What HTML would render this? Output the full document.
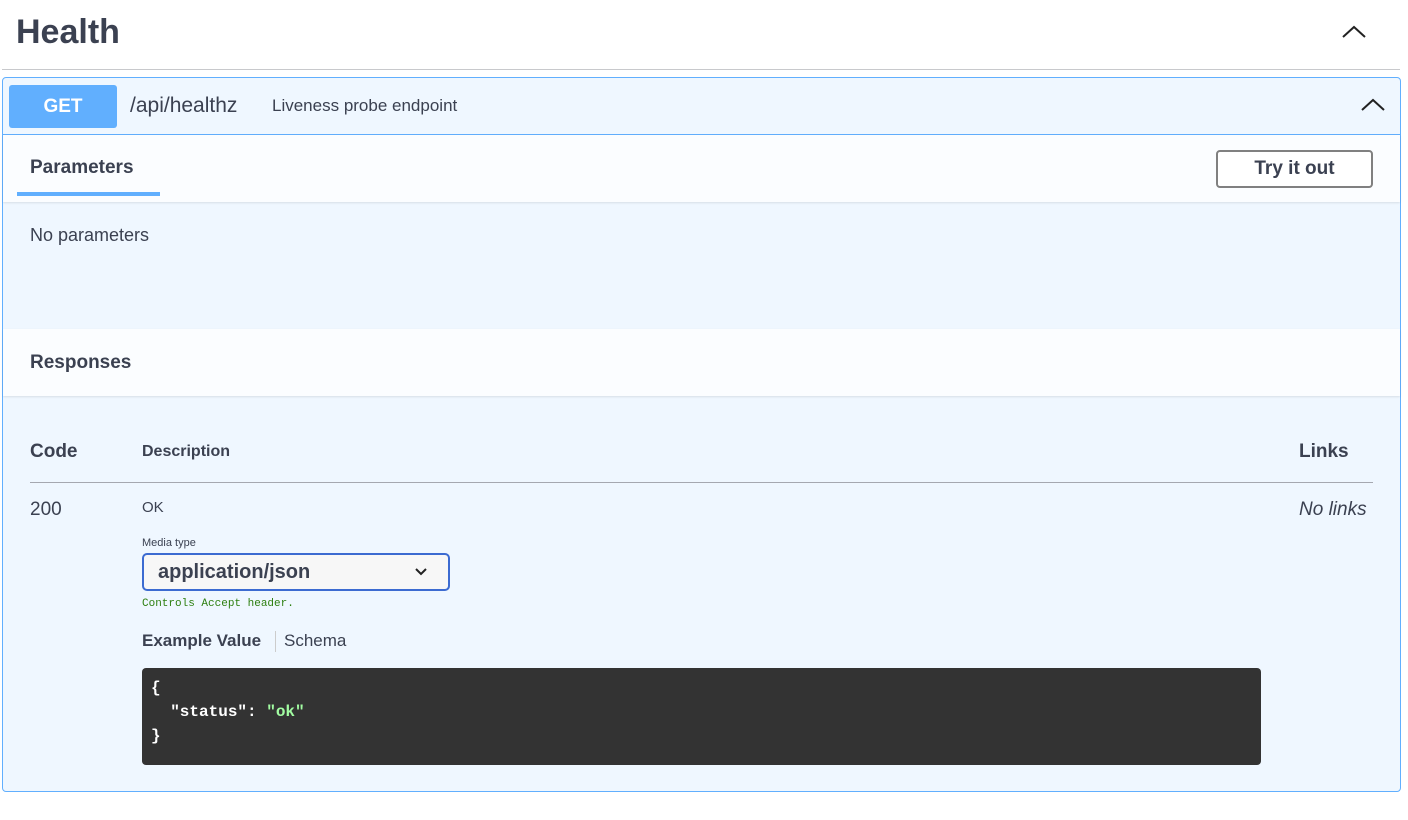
<!DOCTYPE html>
<html><head><meta charset="utf-8"><style>
*{box-sizing:border-box;margin:0;padding:0}
body{width:1408px;height:820px;background:#fff;font-family:"Liberation Sans",sans-serif;color:#3b4151;position:relative;overflow:hidden}
.abs{position:absolute}
</style></head><body>
<div class="abs" style="left:16px;top:12px;font-size:34px;font-weight:bold;line-height:40px">Health</div>
<svg class="abs" style="left:1341px;top:24px" width="26" height="16" viewBox="0 0 26 16"><path d="M2 13 L13 3 L24 13" fill="none" stroke="#222" stroke-width="2"/></svg>
<div class="abs" style="left:2px;top:69px;width:1398px;height:1px;background:#c8c9cc"></div>

<div class="abs" style="left:2px;top:77px;width:1399px;height:715px;border:1px solid #61affe;border-radius:4px;background:#eff7ff"></div>
<div class="abs" style="left:3px;top:134px;width:1397px;height:1px;background:#61affe"></div>
<div class="abs" style="left:9px;top:85px;width:108px;height:43px;background:#61affe;border-radius:3px;color:#fff;font-weight:bold;font-size:19px;text-align:center;line-height:43px">GET</div>
<div class="abs" style="left:130px;top:93px;font-size:21px;line-height:26px;color:#3b4151">/api/healthz</div>
<div class="abs" style="left:272px;top:95px;font-size:17px;line-height:22px">Liveness probe endpoint</div>
<svg class="abs" style="left:1360px;top:97px" width="26" height="16" viewBox="0 0 26 16"><path d="M2 13 L13 3 L24 13" fill="none" stroke="#222" stroke-width="2"/></svg>

<div class="abs" style="left:3px;top:135px;width:1397px;height:67px;background:#fbfdff;box-shadow:0 1px 2px rgba(0,0,0,.1)"></div>
<div class="abs" style="left:30px;top:156px;font-size:19px;font-weight:bold;line-height:24px">Parameters</div>
<div class="abs" style="left:17px;top:192px;width:143px;height:4px;background:#61affe"></div>
<div class="abs" style="left:1216px;top:150px;width:157px;height:38px;border:2px solid #808080;border-radius:4px;background:#fff;font-size:19px;font-weight:bold;text-align:center;line-height:34px">Try it out</div>
<div class="abs" style="left:30px;top:224px;font-size:18px;line-height:22px">No parameters</div>

<div class="abs" style="left:3px;top:329px;width:1397px;height:67px;background:#fbfdff;box-shadow:0 1px 2px rgba(0,0,0,.1)"></div>
<div class="abs" style="left:30px;top:351px;font-size:19px;font-weight:bold;line-height:24px">Responses</div>

<div class="abs" style="left:30px;top:440px;font-size:19px;font-weight:bold;line-height:24px">Code</div>
<div class="abs" style="left:142px;top:442px;font-size:16px;font-weight:bold;line-height:20px">Description</div>
<div class="abs" style="left:1299px;top:440px;font-size:19px;font-weight:bold;line-height:24px">Links</div>
<div class="abs" style="left:30px;top:482px;width:1343px;height:1px;background:#a5a8b0"></div>
<div class="abs" style="left:30px;top:498px;font-size:19px;line-height:24px">200</div>
<div class="abs" style="left:142px;top:499px;font-size:15px;line-height:18px">OK</div>
<div class="abs" style="left:1299px;top:498px;font-size:19px;font-style:italic;line-height:24px">No links</div>
<div class="abs" style="left:142px;top:536px;font-size:11px;line-height:14px">Media type</div>
<div class="abs" style="left:142px;top:553px;width:308px;height:38px;border:2px solid #3c6bd1;border-radius:5px;background:#f7f7f7;font-size:20px;font-weight:bold;line-height:34px;padding-left:14px">application/json</div>
<svg class="abs" style="left:414px;top:567px" width="14" height="10" viewBox="0 0 14 10"><path d="M2 2 L7 7 L12 2" fill="none" stroke="#222" stroke-width="2"/></svg>
<div class="abs" style="left:142px;top:597px;font-size:11px;line-height:14px;color:#2d7f10;font-family:'Liberation Mono',monospace">Controls Accept header.</div>
<div class="abs" style="left:142px;top:630px;font-size:17px;font-weight:bold;line-height:22px">Example Value</div>
<div class="abs" style="left:275px;top:631px;width:1px;height:21px;background:#ccc"></div>
<div class="abs" style="left:284px;top:630px;font-size:17px;line-height:22px">Schema</div>
<div class="abs" style="left:142px;top:668px;width:1119px;height:97px;background:#333;border-radius:4px;padding:8px 9px;color:#fff;font-family:'Liberation Mono',monospace;font-size:16px;font-weight:bold;line-height:24px;white-space:pre">{
  "status": <span style="color:#a2fca2">"ok"</span>
}</div>
</body></html>
